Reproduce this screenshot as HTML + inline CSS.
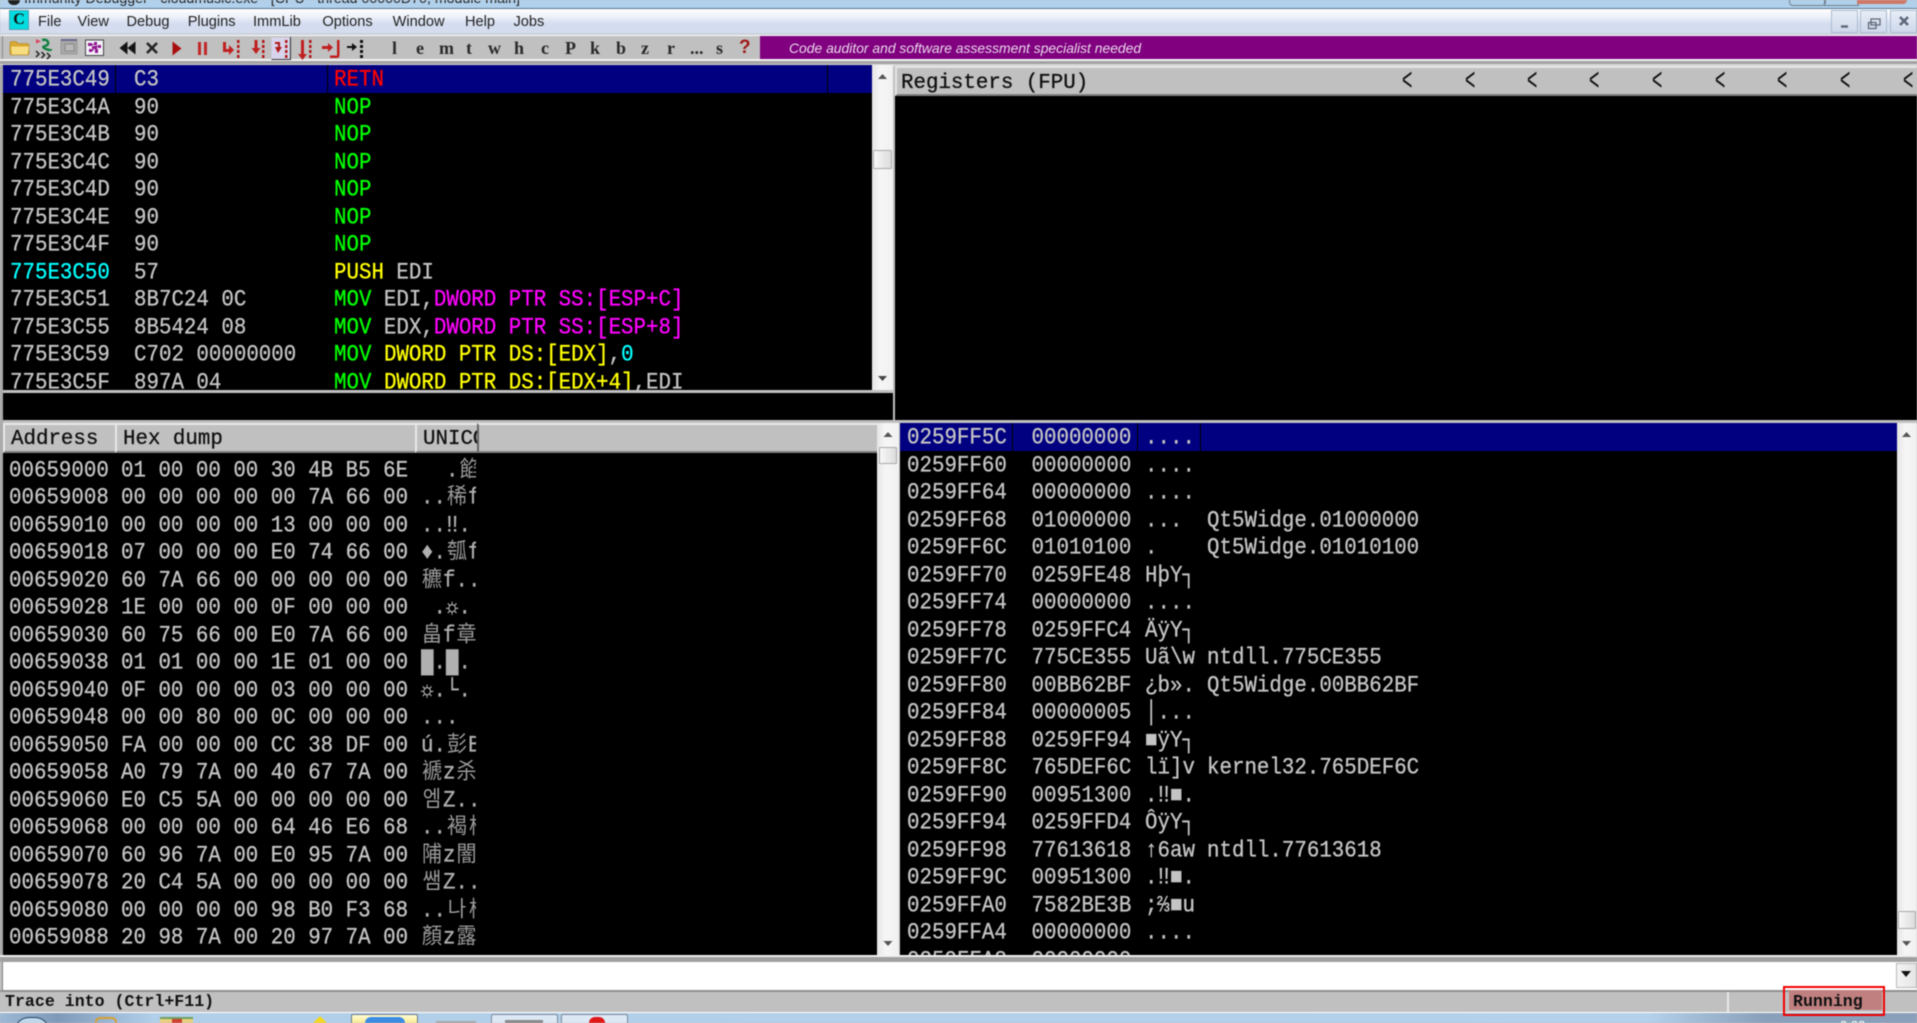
<!DOCTYPE html>
<html><head><meta charset="utf-8"><title>Immunity Debugger</title>
<style>
html,body{margin:0;padding:0;background:#c0c0c0;}
body{width:1917px;height:1023px;overflow:hidden;position:relative;}
#root{position:absolute;left:0;top:0;width:1917px;height:1023px;overflow:hidden;background:#c0c0c0;filter:blur(.45px);font-family:"Liberation Mono","Noto Sans CJK SC",monospace;}
.a{position:absolute;}
.m{position:absolute;top:12px;font:14.6px/20px "Liberation Sans",sans-serif;color:#222;}
.t{position:absolute;top:38px;font:bold 18px/20px "Liberation Serif",serif;color:#2a2a2a;}
.pane{position:absolute;background:#000;overflow:hidden;}
.r{position:relative;height:27.5px;font-size:20.8px;line-height:27.5px;color:#c4c4c4;white-space:pre;-webkit-text-stroke:.3px currentColor;}
.r span{position:absolute;top:2px;transform:scaleY(1.1);transform-origin:50% 50%;}
.sel{background:#000080;}
.d1{left:7px}.d2{left:131px}.d3{left:331px}
.h1{left:6px}.h2{left:118px}.h3{left:418px;width:55px;overflow:hidden;color:#b0b0b0;}
.s1{left:7px}.s2{left:131.5px}.s3{left:245px}.s4{left:307px}
i{font-style:normal;}
.c{display:inline-block;width:22px;text-align:center;font-size:20px;line-height:20px;color:#9a9a9a;-webkit-text-stroke:0;vertical-align:baseline;}
b{font-weight:normal;}
.g{color:#00ff00}.y{color:#ffff00}.p{color:#ff00ff}.cy{color:#00ffff}.rd{color:#ff0000}
.hd{position:absolute;top:423px;height:30px;background:#c0c0c0;border-top:2px solid #e8e8e8;border-left:2px solid #e8e8e8;border-bottom:2px solid #808080;box-sizing:border-box;font-size:20.8px;line-height:30px;color:#111;white-space:pre;overflow:hidden;padding-left:6px;-webkit-text-stroke:.3px #111;}
.sb{position:absolute;background:linear-gradient(90deg,#e6e6e6,#f6f6f6 40%,#f0f0f0);}
.th{position:absolute;background:linear-gradient(90deg,#f8f8f8,#dcdcdc);border:1px solid #a8a8a8;box-sizing:border-box;border-radius:1px;}
.ch{position:absolute;top:71px;font-size:20.8px;line-height:26px;color:#111;transform:scaleX(.85) scaleY(1.5);}
.wb{position:absolute;top:10px;height:23px;width:27px;background:linear-gradient(#e8edf6,#cfd9ec);border:1px solid #a9bbd0;box-sizing:border-box;}
</style></head><body><div id="root">

<!-- title bar -->
<div class="a" style="left:0;top:0;width:1917px;height:9px;background:#b0d0ec;overflow:hidden;border-bottom:1px solid #5a7590;box-sizing:border-box;">
<div class="a" style="left:24px;top:-10px;font:14.2px/18px 'Liberation Sans',sans-serif;color:#222;white-space:nowrap;">Immunity Debugger - cloudmusic.exe - [CPU - thread 00000D70, module main]</div>
<div class="a" style="left:8px;top:-5px;width:12px;height:10px;background:#222;border-radius:5px;"></div>
<div class="a" style="left:1789px;top:-3px;width:35px;height:7px;border:1px solid #6f7f90;border-radius:0 0 4px 4px;"></div>
<div class="a" style="left:1824px;top:-3px;width:33px;height:7px;border:1px solid #6f7f90;"></div>
<div class="a" style="left:1857px;top:-3px;width:50px;height:7px;background:#d07868;border-radius:0 0 4px 0;"></div>
</div>

<!-- menu bar -->
<div class="a" style="left:0;top:9px;width:1917px;height:26px;background:linear-gradient(#ffffff,#eef1f9 30%,#d5ddf0 55%,#d4dcee 90%,#c4c8d0);"></div>
<div class="a" style="left:9px;top:10px;width:20px;height:20px;background:#00dce0;border:1px solid #50a0b0;box-sizing:border-box;font:bold 16px/18px 'Liberation Serif',serif;color:#111;text-align:center;">C</div>
<div class="m" style="left:38px">File</div><div class="m" style="left:77.5px">View</div><div class="m" style="left:126.5px">Debug</div><div class="m" style="left:187.7px">Plugins</div><div class="m" style="left:253px">ImmLib</div><div class="m" style="left:322.4px">Options</div><div class="m" style="left:392.6px">Window</div><div class="m" style="left:465px">Help</div><div class="m" style="left:513.5px">Jobs</div>
<div class="wb" style="left:1831px"></div><div class="wb" style="left:1860px"></div><div class="wb" style="left:1890px"></div>
<svg class="a" style="left:1831px;top:10px" width="86" height="23" fill="none" stroke="#5d6878">
<path d="M10 16.5h7" stroke-width="2.4"/>
<path d="M40 9h9v6h-9zM37.500 12.500h7.500v6h-7.500z" stroke-width="1.3"/>
<path d="M69 7l8 8M77 7l-8 8" stroke-width="2.6"/>
</svg>

<!-- toolbar -->
<div class="a" style="left:0;top:35px;width:1917px;height:1.500px;background:#fff;"></div>
<div class="a" style="left:0;top:36px;width:760px;height:23px;background:#c0c0c0;"></div>
<div class="a" style="left:760px;top:36px;width:1157px;height:23px;background:#800080;"></div>
<div class="a" style="left:2px;top:36px;width:1px;height:24px;background:#8a8a8a;"></div>
<div class="a" style="left:0;top:59px;width:1917px;height:1.500px;background:#f2f2f2;"></div>
<div class="a" style="left:0;top:61px;width:1917px;height:3px;background:#a2a2a2;"></div>
<div class="a" style="left:0;top:64px;width:1917px;height:1.500px;background:#d8d8d8;"></div>

<svg class="a" style="left:0;top:34px" width="380" height="28">
<!-- folder -->
<path d="M10 9.500q0-2 2-2h4l2 2h9q2 0 2 2v8q0 1.500-1.500 1.500H12q-2 0-2-2z" fill="#d9a830" stroke="#a88420" stroke-width=".6"/>
<path d="M11 12.500h18l-1.500 8H12z" fill="#f7dc80"/>
<!-- runner -->
<path d="M36 5l5 2.500-5 2z" fill="#e04060"/>
<path d="M42 6q5-1 6 2t-3 4 1 3 5 0" fill="none" stroke="#108040" stroke-width="2.4"/>
<path d="M36 17l3 3-3 3M41.500 18l3 3-3 3M47 19l3 3-3 3" fill="none" stroke="#222" stroke-width="1.500"/>
<!-- grey window -->
<rect x="61" y="6" width="16" height="14" fill="#a8a8a8" stroke="#9a9a9a"/><rect x="61" y="5" width="16" height="2" fill="#6a6a90"/>
<rect x="65" y="10" width="9" height="7" fill="#b8b8b8" stroke="#8a8a8a"/>
<!-- grid -->
<rect x="85.500" y="6" width="18" height="15.500" fill="#f4f0f8" stroke="#444" stroke-width="1"/>
<path d="M88 9h4v3h-4zM94 8h3v3h-3zM92 12h5v3h-5zM98 11h3v3h-3zM95 15h3v4h-3zM89 15h3v3h-3z" fill="#901890"/>
<path d="M92 10.500h2M96 11v2M98 12.500h-1M93 15v1.500h-1" stroke="#901890"/>
<!-- rewind -->
<path d="M127.500 7.500v13l-8-6.500zM135.500 7.500v13l-8-6.500z" fill="#151515"/>
<!-- x -->
<path d="M147 9l10 10M157 9l-10 10" stroke="#222" stroke-width="2.600"/>
<!-- play/pause -->
<path d="M172.500 7.500l9 7-9 7z" fill="#a81010"/>
<path d="M198 8h3v13h-3zM204 8h3v13h-3z" fill="#c02828"/>
<!-- step icons -->
<path d="M223 8h3v7h3v-4l5 5-5 5v-3h-6z" fill="#c02020"/>
<path d="M237 6h2.500v3H237zM237 11h2.500v3H237zM237 16h2.500v3H237zM237 21h2.500v3H237z" fill="#b01818"/>
<path d="M254.500 6h3v8h3l-4.500 6-4.500-6h3z" fill="#c02020"/>
<path d="M262 6h2.500v3H262zM262 11h2.500v3H262zM262 16h2.500v3H262zM262 21h2.500v3H262z" fill="#b01818"/>
<rect x="271.500" y="3.500" width="18" height="22" fill="#d8d4ec"/><path d="M271.500 25.500h19V3" fill="none" stroke="#333"/>
<path d="M280 8h-5v2h3v3h-3l3 6 4-6h-2z" fill="#b01818"/>
<path d="M285 6h2.500v3H285zM285 11h2.500v3H285zM285 16h2.500v3H285zM285 21h2.500v3H285z" fill="#b01818"/>
<path d="M301 6h3v14h3l-4.500 6-4.500-6h3z" fill="#c02020"/>
<path d="M309 6h2.500v3H309zM309 11h2.500v3H309zM309 16h2.500v3H309zM309 21h2.500v3H309z" fill="#b01818"/>
<path d="M322 12h6v-3l5 4.500-5 4.500v-3h-6z" fill="#c02020"/>
<path d="M337 6h2.500v15q0 3-3 3H330v-2.500h7z" fill="#c02020"/>
<path d="M347 12h5v-3l5 4-5 4v-3h-5z" fill="#111"/>
<path d="M360 6h3v3h-3zM360 11h3v3h-3zM360 16h3v3h-3zM360 21h3v3h-3z" fill="#111"/>
</svg>
<div class="t" style="left:392px">l</div><div class="t" style="left:416px">e</div><div class="t" style="left:439px">m</div><div class="t" style="left:466px">t</div><div class="t" style="left:488px">w</div><div class="t" style="left:514px">h</div><div class="t" style="left:541px">c</div><div class="t" style="left:565px">P</div><div class="t" style="left:590px">k</div><div class="t" style="left:616px">b</div><div class="t" style="left:641px">z</div><div class="t" style="left:667px">r</div><div class="t" style="left:690px">...</div><div class="t" style="left:716px">s</div>
<div class="t" style="left:739px;color:#a01818;font-family:'Liberation Sans',sans-serif;font-size:19px;">?</div>
<div class="a" style="left:789px;top:39px;font:italic 13.9px/18px 'Liberation Sans',sans-serif;color:#e8d8e8;white-space:nowrap;">Code auditor and software assessment specialist needed</div>

<!-- disassembly -->
<div class="pane" style="left:3px;top:65px;width:869px;height:325px;">
<div class="r sel"><span class="d1">775E3C49</span><span class="d2">C3</span><span class="d3 rd">RETN</span>
<u class="a" style="left:112px;top:0;width:1px;height:28px;background:#000;"></u><u class="a" style="left:324px;top:0;width:1px;height:28px;background:#000;"></u><u class="a" style="left:824px;top:0;width:1px;height:28px;background:#000;"></u></div>
<div class="r"><span class="d1">775E3C4A</span><span class="d2">90</span><span class="d3 g">NOP</span></div>
<div class="r"><span class="d1">775E3C4B</span><span class="d2">90</span><span class="d3 g">NOP</span></div>
<div class="r"><span class="d1">775E3C4C</span><span class="d2">90</span><span class="d3 g">NOP</span></div>
<div class="r"><span class="d1">775E3C4D</span><span class="d2">90</span><span class="d3 g">NOP</span></div>
<div class="r"><span class="d1">775E3C4E</span><span class="d2">90</span><span class="d3 g">NOP</span></div>
<div class="r"><span class="d1">775E3C4F</span><span class="d2">90</span><span class="d3 g">NOP</span></div>
<div class="r"><span class="d1 cy">775E3C50</span><span class="d2">57</span><span class="d3"><b class="y">PUSH</b> EDI</span></div>
<div class="r"><span class="d1">775E3C51</span><span class="d2">8B7C24 0C</span><span class="d3"><b class="g">MOV</b> EDI,<b class="p">DWORD PTR SS:[ESP+C]</b></span></div>
<div class="r"><span class="d1">775E3C55</span><span class="d2">8B5424 08</span><span class="d3"><b class="g">MOV</b> EDX,<b class="p">DWORD PTR SS:[ESP+8]</b></span></div>
<div class="r"><span class="d1">775E3C59</span><span class="d2">C702 00000000</span><span class="d3"><b class="g">MOV</b> <b class="y">DWORD PTR DS:[EDX]</b>,<b class="cy">0</b></span></div>
<div class="r"><span class="d1">775E3C5F</span><span class="d2">897A 04</span><span class="d3"><b class="g">MOV</b> <b class="y">DWORD PTR DS:[EDX+4]</b>,EDI</span></div>
</div>
<!-- disasm scrollbar -->
<div class="sb" style="left:872px;top:65px;width:21px;height:325px;"></div>
<div class="th" style="left:873px;top:150px;width:19px;height:19px;"></div>
<svg class="a" style="left:872px;top:65px" width="21" height="325"><path d="M6 14l4.500-5 4.500 5z" fill="#555"/><path d="M6 311l4.500 5 4.500-5z" fill="#444"/></svg>
<!-- left edge -->
<div class="a" style="left:0;top:65px;width:3px;height:890px;background:#a8a8a8;"></div>

<!-- info pane -->
<div class="pane" style="left:3px;top:392.5px;width:890px;height:27.5px;"></div>

<!-- registers -->
<div class="a" style="left:895px;top:65.5px;width:1022px;height:30px;background:#c0c0c0;border-top:2px solid #e4e4e4;border-left:2px solid #e4e4e4;border-bottom:2px solid #808080;box-sizing:border-box;font-size:20.8px;line-height:32px;color:#111;padding-left:4px;white-space:pre;-webkit-text-stroke:.3px #111;overflow:hidden;">Registers (FPU)</div>
<div class="ch" style="left:1401px">&lt;</div><div class="ch" style="left:1464px">&lt;</div><div class="ch" style="left:1526px">&lt;</div><div class="ch" style="left:1588px">&lt;</div><div class="ch" style="left:1651px">&lt;</div><div class="ch" style="left:1714px">&lt;</div><div class="ch" style="left:1776px">&lt;</div><div class="ch" style="left:1839px">&lt;</div><div class="ch" style="left:1902px">&lt;</div>
<div class="pane" style="left:895px;top:95.5px;width:1022px;height:324.5px;"></div>

<!-- dump headers -->
<div class="hd" style="left:3px;width:112px;">Address</div>
<div class="hd" style="left:115px;width:300px;">Hex dump</div>
<div class="hd" style="left:415px;width:62px;">UNICODE</div>
<div class="hd" style="left:477px;width:400px;border-left:2px solid #666;"></div>

<!-- dump -->
<div class="pane" style="left:3px;top:453px;width:874px;height:502px;padding-top:2.500px;box-sizing:border-box;">
<div class="r"><span class="h1">00659000</span><span class="h2">01 00 00 00 30 4B B5 6E</span><span class="h3">  .<i class="c">餡</i>:</span></div>
<div class="r"><span class="h1">00659008</span><span class="h2">00 00 00 00 00 7A 66 00</span><span class="h3">..<i class="c">稀</i>f</span></div>
<div class="r"><span class="h1">00659010</span><span class="h2">00 00 00 00 13 00 00 00</span><span class="h3">..‼.</span></div>
<div class="r"><span class="h1">00659018</span><span class="h2">07 00 00 00 E0 74 66 00</span><span class="h3">♦.<i class="c">瓠</i>f</span></div>
<div class="r"><span class="h1">00659020</span><span class="h2">60 7A 66 00 00 00 00 00</span><span class="h3"><i class="c">穮</i>f..</span></div>
<div class="r"><span class="h1">00659028</span><span class="h2">1E 00 00 00 0F 00 00 00</span><span class="h3"> .☼.</span></div>
<div class="r"><span class="h1">00659030</span><span class="h2">60 75 66 00 E0 7A 66 00</span><span class="h3"><i class="c">畠</i>f<i class="c">章</i>:</span></div>
<div class="r"><span class="h1">00659038</span><span class="h2">01 01 00 00 1E 01 00 00</span><span class="h3">█.█.</span></div>
<div class="r"><span class="h1">00659040</span><span class="h2">0F 00 00 00 03 00 00 00</span><span class="h3">☼.└.</span></div>
<div class="r"><span class="h1">00659048</span><span class="h2">00 00 80 00 0C 00 00 00</span><span class="h3">...</span></div>
<div class="r"><span class="h1">00659050</span><span class="h2">FA 00 00 00 CC 38 DF 00</span><span class="h3">ú.<i class="c">彭</i>B</span></div>
<div class="r"><span class="h1">00659058</span><span class="h2">A0 79 7A 00 40 67 7A 00</span><span class="h3"><i class="c">褫</i>z<i class="c">杀</i>:</span></div>
<div class="r"><span class="h1">00659060</span><span class="h2">E0 C5 5A 00 00 00 00 00</span><span class="h3"><i class="c">엠</i>Z..</span></div>
<div class="r"><span class="h1">00659068</span><span class="h2">00 00 00 00 64 46 E6 68</span><span class="h3">..<i class="c">褐</i><i class="c">桥</i></span></div>
<div class="r"><span class="h1">00659070</span><span class="h2">60 96 7A 00 E0 95 7A 00</span><span class="h3"><i class="c">陠</i>z<i class="c">闇</i>:</span></div>
<div class="r"><span class="h1">00659078</span><span class="h2">20 C4 5A 00 00 00 00 00</span><span class="h3"><i class="c">쌤</i>Z..</span></div>
<div class="r"><span class="h1">00659080</span><span class="h2">00 00 00 00 98 B0 F3 68</span><span class="h3">..<i class="c">나</i><i class="c">桥</i></span></div>
<div class="r"><span class="h1">00659088</span><span class="h2">20 98 7A 00 20 97 7A 00</span><span class="h3"><i class="c">顏</i>z<i class="c">露</i>:</span></div>
</div>
<!-- dump scrollbar -->
<div class="sb" style="left:877px;top:423px;width:22px;height:532px;"></div>
<div class="th" style="left:879px;top:447px;width:18px;height:17px;"></div>
<svg class="a" style="left:877px;top:423px" width="22" height="532"><path d="M6.500 14l4.500-5 4.500 5z" fill="#555"/><path d="M6.500 518l4.500 5 4.500-5z" fill="#555"/></svg>

<!-- stack -->
<div class="pane" style="left:900px;top:423px;width:997px;height:532px;">
<div class="r sel"><span class="s1">0259FF5C</span><span class="s2">00000000</span><span class="s3">....</span>
<u class="a" style="left:112px;top:0;width:1px;height:28px;background:#000;"></u><u class="a" style="left:237px;top:0;width:1px;height:28px;background:#000;"></u><u class="a" style="left:299.500px;top:0;width:1px;height:28px;background:#000;"></u></div>
<div class="r"><span class="s1">0259FF60</span><span class="s2">00000000</span><span class="s3">....</span></div>
<div class="r"><span class="s1">0259FF64</span><span class="s2">00000000</span><span class="s3">....</span></div>
<div class="r"><span class="s1">0259FF68</span><span class="s2">01000000</span><span class="s3">...</span><span class="s4">Qt5Widge.01000000</span></div>
<div class="r"><span class="s1">0259FF6C</span><span class="s2">01010100</span><span class="s3">.</span><span class="s4">Qt5Widge.01010100</span></div>
<div class="r"><span class="s1">0259FF70</span><span class="s2">0259FE48</span><span class="s3">HþY┐</span></div>
<div class="r"><span class="s1">0259FF74</span><span class="s2">00000000</span><span class="s3">....</span></div>
<div class="r"><span class="s1">0259FF78</span><span class="s2">0259FFC4</span><span class="s3">ÄÿY┐</span></div>
<div class="r"><span class="s1">0259FF7C</span><span class="s2">775CE355</span><span class="s3">Uã\w</span><span class="s4">ntdll.775CE355</span></div>
<div class="r"><span class="s1">0259FF80</span><span class="s2">00BB62BF</span><span class="s3">¿b».</span><span class="s4">Qt5Widge.00BB62BF</span></div>
<div class="r"><span class="s1">0259FF84</span><span class="s2">00000005</span><span class="s3">│...</span></div>
<div class="r"><span class="s1">0259FF88</span><span class="s2">0259FF94</span><span class="s3">■ÿY┐</span></div>
<div class="r"><span class="s1">0259FF8C</span><span class="s2">765DEF6C</span><span class="s3">lï]v</span><span class="s4">kernel32.765DEF6C</span></div>
<div class="r"><span class="s1">0259FF90</span><span class="s2">00951300</span><span class="s3">.‼■.</span></div>
<div class="r"><span class="s1">0259FF94</span><span class="s2">0259FFD4</span><span class="s3">ÔÿY┐</span></div>
<div class="r"><span class="s1">0259FF98</span><span class="s2">77613618</span><span class="s3">↑6aw</span><span class="s4">ntdll.77613618</span></div>
<div class="r"><span class="s1">0259FF9C</span><span class="s2">00951300</span><span class="s3">.‼■.</span></div>
<div class="r"><span class="s1">0259FFA0</span><span class="s2">7582BE3B</span><span class="s3">;⅔■u</span></div>
<div class="r"><span class="s1">0259FFA4</span><span class="s2">00000000</span><span class="s3">....</span></div>
<div class="r"><span class="s1">0259FFA8</span><span class="s2">00000000</span><span class="s3">....</span></div>
</div>
<!-- stack scrollbar -->
<div class="sb" style="left:1897px;top:423px;width:20px;height:532px;"></div>
<div class="th" style="left:1898px;top:911px;width:18px;height:18px;"></div>
<svg class="a" style="left:1897px;top:423px" width="20" height="532"><path d="M5 14l4.500-5 4.500 5z" fill="#555"/><path d="M5 518l4.500 5 4.500-5z" fill="#555"/></svg>

<!-- command bar -->
<div class="a" style="left:0;top:955px;width:1917px;height:2px;background:#f0f0f0;"></div>
<div class="a" style="left:0;top:957px;width:1917px;height:5px;background:#a0a0a0;"></div>
<div class="a" style="left:2px;top:962px;width:1915px;height:28px;background:#fff;border-left:1px solid #808080;box-sizing:border-box;"></div>
<div class="a" style="left:1896px;top:963px;width:21px;height:25px;background:linear-gradient(90deg,#f4f4f4,#e4e4e4);border:1px solid #b8b8b8;box-sizing:border-box;"></div>
<svg class="a" style="left:1896px;top:963px" width="21" height="25"><path d="M5 8h10l-5 6z" fill="#111"/></svg>
<div class="a" style="left:0;top:990px;width:1917px;height:2px;background:#909090;"></div>

<!-- status bar -->
<div class="a" style="left:0;top:992px;width:1917px;height:20px;background:#c0c0c0;"></div>
<div class="a" style="left:5px;top:992px;font:bold 16.6px/20px 'Liberation Mono',monospace;color:#111;white-space:pre;">Trace into (Ctrl+F11)</div>
<div class="a" style="left:1727px;top:992px;width:2px;height:20px;background:#e8e8e8;"></div>
<div class="a" style="left:1789px;top:990px;width:93px;height:20px;background:#c08080;"></div>
<div class="a" style="left:1793px;top:992px;font:bold 16.6px/20px 'Liberation Mono',monospace;color:#111;white-space:pre;">Running</div>
<div class="a" style="left:0;top:1012px;width:1917px;height:1px;background:#fff;"></div>

<!-- taskbar -->
<div class="a" style="left:0;top:1013px;width:1917px;height:10px;background:linear-gradient(90deg,#9cb8d4 0,#7f9ab8 3%,#b2cfea 8%,#b4d0ea 86%,#8aa0ba 92%,#8aa0ba 100%);"></div>
<div class="a" style="left:1783px;top:986px;width:102px;height:30px;border:2.500px solid #f00000;box-sizing:border-box;"></div>
<div class="a" style="left:14px;top:1017px;width:36px;height:30px;border-radius:18px;background:#c0d8ec;border:1px solid #22425e;box-sizing:border-box;"></div>
<div class="a" style="left:95px;top:1017px;width:22px;height:10px;border:2px solid #d8a030;border-radius:10px;box-sizing:border-box;"></div>
<div class="a" style="left:160px;top:1017px;width:33px;height:10px;background:#e8d080;border-top:2px solid #70a060;box-sizing:border-box;"></div>
<div class="a" style="left:172px;top:1019px;width:10px;height:6px;background:#d04030;"></div>
<svg class="a" style="left:310px;top:1016px" width="20" height="8"><path d="M10 0l8 8H2z" fill="#f4d820"/></svg>
<div class="a" style="left:351px;top:1014px;width:67px;height:9px;background:linear-gradient(#fffbd8,#f8ec90);border:1px solid #6a7a88;border-bottom:0;box-sizing:border-box;border-radius:2px 2px 0 0;"></div>
<div class="a" style="left:365px;top:1017px;width:40px;height:6px;background:#3c8ce4;border-radius:7px 7px 0 0;"></div>
<div class="a" style="left:436px;top:1021px;width:40px;height:2px;background:#a8a8a8;"></div>
<div class="a" style="left:491px;top:1014px;width:67px;height:9px;background:#dce8f4;border:1px solid #7a8a9a;border-bottom:0;box-sizing:border-box;border-radius:2px 2px 0 0;"></div>
<div class="a" style="left:505px;top:1020px;width:38px;height:3px;background:#8a8a8a;"></div>
<div class="a" style="left:561px;top:1014px;width:67px;height:9px;background:#dce8f4;border:1px solid #7a8a9a;border-bottom:0;box-sizing:border-box;border-radius:2px 2px 0 0;"></div>
<div class="a" style="left:589px;top:1017px;width:16px;height:6px;background:#e01818;border-radius:8px 8px 0 0;"></div>
<div class="a" style="left:1840px;top:1019px;font:13px/14px 'Liberation Sans',sans-serif;color:#fff;">2:32</div>

</div></body></html>
